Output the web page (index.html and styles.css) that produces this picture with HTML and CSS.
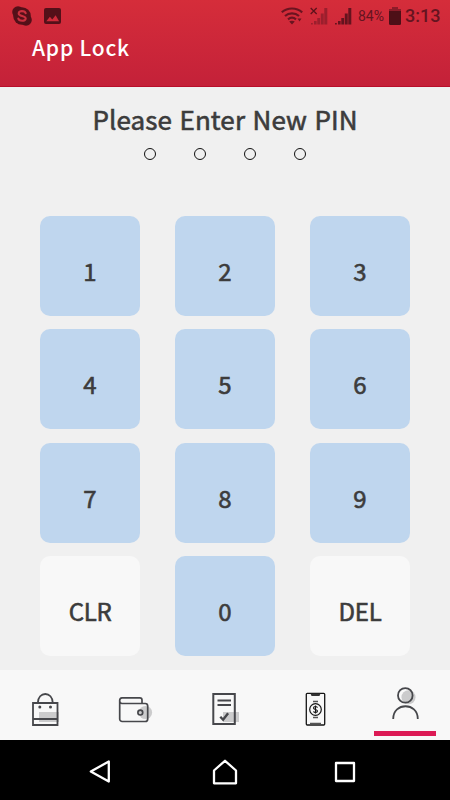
FILE: index.html
```html
<!DOCTYPE html>
<html lang="en">
<head>
    <meta charset="UTF-8">
    <meta name="viewport" content="width=device-width, initial-scale=1.0">
    <title>App Lock</title>
    <link rel="stylesheet" href="styles.css">
</head>
<body>
    <div class="screen">
        <header class="header">
            <div class="status-bar">
                <div class="status-left">
                    <svg width="20" height="20" viewBox="0 0 20 20">
                        <circle cx="6" cy="6" r="5.8" fill="#541019"/>
                        <circle cx="14" cy="14" r="5.8" fill="#541019"/>
                        <circle cx="10" cy="10" r="8.8" fill="#541019"/>
                        <path d="M13.7 7.2C13 4.6 6.7 4.2 6.7 7.4c0 3.3 7 1.8 7 5.1 0 3.2-6.8 2.8-7.4.1" fill="none" stroke="#c9303f" stroke-width="2.1" stroke-linecap="round"/>
                    </svg>
                    <svg width="17" height="16" viewBox="0 0 17 16">
                        <rect width="17" height="16" rx="2" fill="#541019"/>
                        <path d="M2.3 13.3l3.6-4.5 2.4 2.7 3.3-4.3 3.5 6.1z" fill="#cf2b3a"/>
                    </svg>
                </div>
                <div class="status-right">
                    <svg width="22" height="18" viewBox="0 0 22 18">
                        <g fill="none" stroke="#6b1420" stroke-width="2.2">
                            <path d="M.8 5.3C6.5.2 15.4.2 21.2 5.3"/>
                            <path d="M4 9c4-3.6 10-3.6 14 0"/>
                            <path d="M7 12.4c2.4-2 5.6-2 8 0"/>
                        </g>
                        <path d="M8.2 14.6c1.6-1.2 4-1.2 5.6 0L11 17.5zM16.5 11.5h4L18.5 14.5z" fill="#6b1420"/>
                    </svg>
                    <svg class="signal-off" width="18" height="18" viewBox="0 0 18 18">
                        <path d="M1 16h1.8v1.5H1zM4 14h2.6v3.5H4zM7.3 11h2.8v6.5H7.3zM10.8 6.5h2.9v11h-2.9zM14.3 1h3v16.5h-3z" fill="#9b1f2d"/>
                        <path d="M.7 1l6 6M6.7 1l-6 6" stroke="#5d121b" stroke-width="1.3"/>
                    </svg>
                    <svg class="signal" width="18" height="18" viewBox="0 0 18 18">
                        <path d="M1 16h1.8v1.5H1zM4 14h2.6v3.5H4zM7.3 11h2.8v6.5H7.3zM10.8 6.5h2.9v11h-2.9zM14.3 1h3v16.5h-3z" fill="#65131e"/>
                    </svg>
                    <span class="battery-level">84%</span>
                    <svg class="battery" width="12" height="18" viewBox="0 0 12 18">
                        <path d="M3 0h6v2h3v3H0V2h3z" fill="#8d1c29"/>
                        <path d="M0 4h12v12.5a1.5 1.5 0 0 1-1.5 1.5h-9A1.5 1.5 0 0 1 0 16.5z" fill="#4d0f17"/>
                    </svg>
                    <span class="clock">3:13</span>
                </div>
            </div>
            <h1 class="title">App Lock</h1>
        </header>

        <main class="content">
            <h2 class="prompt">Please Enter New PIN</h2>
            <div class="pin-dots">
                <span class="dot"></span>
                <span class="dot"></span>
                <span class="dot"></span>
                <span class="dot"></span>
            </div>
            <div class="keypad">
                <button class="key">1</button>
                <button class="key">2</button>
                <button class="key">3</button>
                <button class="key">4</button>
                <button class="key">5</button>
                <button class="key">6</button>
                <button class="key">7</button>
                <button class="key">8</button>
                <button class="key">9</button>
                <button class="key key-action">CLR</button>
                <button class="key">0</button>
                <button class="key key-action">DEL</button>
            </div>
        </main>

        <nav class="tabs">
            <a class="tab">
                <svg width="34" height="40" viewBox="0 0 34 40">
                    <path d="M11 23h20v10H11z" fill="#cbcbcc"/>
                    <g fill="none" stroke="#46474b" stroke-width="1.8">
                        <path d="M5 14h24.5v22H5zM5 30h24.5"/>
                        <path d="M9.8 14c0-12 15-12 15 0"/>
                    </g>
                    <circle cx="11.8" cy="18" r="1.5" fill="#46474b"/>
                    <circle cx="22.5" cy="18" r="1.5" fill="#46474b"/>
                </svg>
            </a>
            <a class="tab">
                <svg width="36" height="40" viewBox="0 0 36 40">
                    <circle cx="28.5" cy="23.5" r="6.6" fill="#cbcbcc"/>
                    <g fill="none" stroke="#46474b" stroke-width="1.7">
                        <path d="M25 14.5V11a2.2 2.2 0 0 0-2.2-2.2H5A2.5 2.5 0 0 0 2.7 11.2V30a2.5 2.5 0 0 0 2.5 2.5h23A2.5 2.5 0 0 0 30.7 30V17a2.5 2.5 0 0 0-2.5-2.5H5A2.5 2.5 0 0 1 2.7 12"/>
                        <circle cx="23.3" cy="23.6" r="2.4"/>
                    </g>
                </svg>
            </a>
            <a class="tab">
                <svg width="34" height="40" viewBox="0 0 34 40">
                    <path d="M15 23h16v10H15z" fill="#cbcbcc"/>
                    <g fill="none" stroke="#46474b" stroke-width="2">
                        <path d="M5.3 5h21.500V35H5.300zM9.5 11.5h13.5M9.5 16h13.5"/>
                        <path d="M12.3 27.7l2.8 3 5-6.5" stroke-width="2.4"/>
                    </g>
                </svg>
            </a>
            <a class="tab">
                <svg width="24" height="40" viewBox="0 0 24 40">
                    <rect x="3.3" y="4.3" width="18.4" height="31.7" rx="1" fill="none" stroke="#151515" stroke-width="1.3"/>
                    <path d="M7.5 4.5h10l-1 2.5H8.5z" fill="#333"/>
                    <path d="M7 34.3h11M10 12.5h5M10 28.5h5" stroke="#555" stroke-width="1.3"/>
                    <circle cx="12.5" cy="20.5" r="5.8" fill="none" stroke="#151515" stroke-width="1.2"/>
                    <path d="M14.5 18.7c-.5-1.700-4-1.500-4 .2s4 1.400 4 3.200-3.500 1.900-4 .2M12.500 16.500v8" fill="none" stroke="#151515" stroke-width="1.1"/>
                </svg>
            </a>
            <a class="tab active">
                <svg width="30" height="40" viewBox="0 0 30 40">
                    <circle cx="18.5" cy="12.3" r="7" fill="#cbcbcc"/>
                    <g fill="none" stroke="#46474b" stroke-width="1.8">
                        <circle cx="15.3" cy="10.4" r="7.3"/>
                        <path d="M3.2 34C3.2 17 27.8 17 27.8 34"/>
                    </g>
                </svg>
            </a>
        </nav>

        <footer class="system-nav">
            <svg width="24" height="26" viewBox="0 0 24 26">
                <path d="M20.8 2.5v20L2.8 12.5z"/>
            </svg>
            <svg width="28" height="28" viewBox="0 0 28 28">
                <path d="M3 12.5L14 2.8l11 9.7V25.300H3z"/>
            </svg>
            <svg width="22" height="22" viewBox="0 0 22 22">
                <path d="M2 2h18v18H2z"/>
            </svg>
        </footer>
    </div>
</body>
</html>
```
FILE: styles.css
```css
* {
    box-sizing: border-box;
}

body {
    margin: 0;
    font-family: "Noto Sans CJK SC", "Noto Sans", sans-serif;
    background-color: #000;
}

.screen {
    width: 450px;
    height: 800px;
    display: flex;
    flex-direction: column;
    background-color: #f0f0f0;
    overflow: hidden;
}

.header {
    height: 87px;
    background: linear-gradient(#d52d3a, #c42139);
    border-bottom: 1px solid #b80f2b;
}

.status-bar {
    height: 31px;
    display: flex;
    justify-content: space-between;
    padding: 0 10px 0 12px;
    font-family: Roboto, sans-serif;
    color: #651420;
}

.status-left,
.status-right {
    display: flex;
    align-items: center;
}

.status-left {
    gap: 12px;
}

.signal-off {
    margin-left: 7px;
}

.signal {
    margin-left: 6px;
}

.battery-level {
    margin-left: 6px;
    width: 27px;
    font-size: 14px;
}

.battery {
    margin-left: 4px;
}

.clock {
    margin-left: 4px;
    width: 35px;
    font-size: 18px;
    font-weight: 500;
}

.title {
    margin: 0 0 0 32px;
    font-size: 21px;
    font-weight: 500;
    line-height: 32px;
    letter-spacing: 0.8px;
    color: #fff;
}

.content {
    height: 583px;
    display: flex;
    flex-direction: column;
    align-items: center;
}

.prompt {
    margin: 12px 0 0;
    font-size: 26px;
    font-weight: 400;
    line-height: 40px;
    letter-spacing: 0.1px;
    word-spacing: 1.5px;
    color: #3c3c3c;
    -webkit-text-stroke: 0.6px #3c3c3c;
    white-space: nowrap;
}

.pin-dots {
    display: flex;
    gap: 38px;
    margin-top: 9px;
}

.dot {
    width: 12px;
    height: 12px;
    border: 1px solid #111;
    border-radius: 50%;
}

.keypad {
    display: grid;
    grid-template-columns: repeat(3, 100px);
    gap: 13.4px 35px;
    margin-top: 56px;
}

.key {
    height: 100px;
    border: none;
    border-radius: 10px;
    padding: 10px 0 0;
    background-color: #bfd6ee;
    color: #3c3c3c;
    font-family: inherit;
    font-size: 24px;
    font-weight: 400;
    line-height: 36px;
    -webkit-text-stroke: 0.6px #3c3c3c;
}

.key-action {
    background-color: #f8f8f8;
    letter-spacing: -0.3px;
}

.tabs {
    height: 70px;
    display: grid;
    grid-template-columns: repeat(5, 90px);
    background-color: #f8f8f8;
}

.tab {
    display: flex;
    justify-content: center;
    padding-top: 19px;
}

.tab.active {
    margin: 0 14px;
    width: 62px;
    padding-top: 15px;
    height: 66px;
    border-bottom: 5px solid #dc1a55;
}

.system-nav {
    height: 60px;
    display: flex;
    justify-content: space-between;
    align-items: center;
    padding: 4px 94px 0 88px;
    background-color: #000;
}

.system-nav svg:nth-child(2) {
    margin-left: 4px;
}

.system-nav path {
    fill: none;
    stroke: #fff;
    stroke-width: 2.3;
    stroke-linejoin: round;
}
```
